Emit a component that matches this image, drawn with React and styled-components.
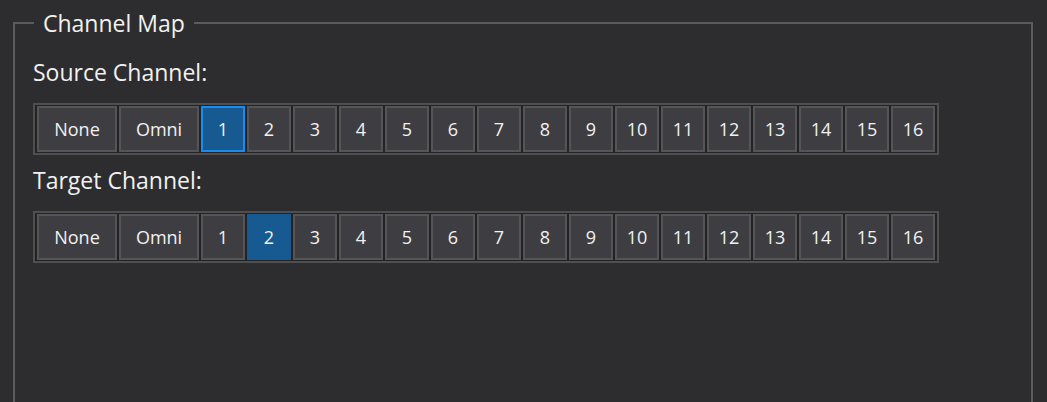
import React from "react";
import styled, { createGlobalStyle } from "styled-components";

const CHANNELS = ["None", "Omni", ...Array.from({ length: 16 }, (_, i) => String(i + 1))];

function ChannelPicker({ label, value, focused }) {
  return (
    <Section>
      <Label>{label}</Label>
      <Group>
        {CHANNELS.map((ch) => (
          <ChannelButton
            key={ch}
            $wide={ch === "None" || ch === "Omni"}
            $selected={ch === value}
            $focused={focused && ch === value}
          >
            {ch}
          </ChannelButton>
        ))}
      </Group>
    </Section>
  );
}

export default function App() {
  return (
    <>
      <GlobalStyle />
      <Frame>
        <Legend>Channel Map</Legend>
        <ChannelPicker label="Source Channel:" value="1" focused />
        <ChannelPicker label="Target Channel:" value="2" />
      </Frame>
    </>
  );
}

const GlobalStyle = createGlobalStyle`
  html, body {
    margin: 0;
    background: #2d2d30;
    overflow: hidden;
  }
  body {
    font-family: "Open Sans", "DejaVu Sans", sans-serif;
    color: #f1f1f1;
  }
`;

const Frame = styled.fieldset`
  margin: 5px 14px 0 13px;
  padding: 16px 18px 0 18px;
  border: 2px solid #5b5b5e;
  min-height: 420px;
  min-width: 0;
`;

const Legend = styled.legend`
  margin-left: 1px;
  padding: 0 9px;
  font-size: 23px;
  line-height: 36px;
  color: #f1f1f1;
`;

const Section = styled.div`
  margin-bottom: 10px;
`;

const Label = styled.div`
  font-size: 23px;
  line-height: 31px;
  margin-bottom: 15px;
`;

const Group = styled.div`
  display: inline-flex;
  gap: 2px;
  padding: 1px 2px;
  border: 2px solid #4f4f52;
  background: #232325;
`;

const ChannelButton = styled.button`
  box-sizing: border-box;
  width: ${(p) => (p.$wide ? "80px" : "44px")};
  height: 46px;
  padding: 0;
  margin: 0;
  font-family: "Open Sans", "DejaVu Sans", sans-serif;
  font-size: 18px;
  color: #f1f1f1;
  background: ${(p) => (p.$selected ? "#175a92" : "#3e3e42")};
  border: 2px solid
    ${(p) => (p.$focused ? "#1a8cf0" : p.$selected ? "#175a92" : "#555558")};
  cursor: pointer;
`;
